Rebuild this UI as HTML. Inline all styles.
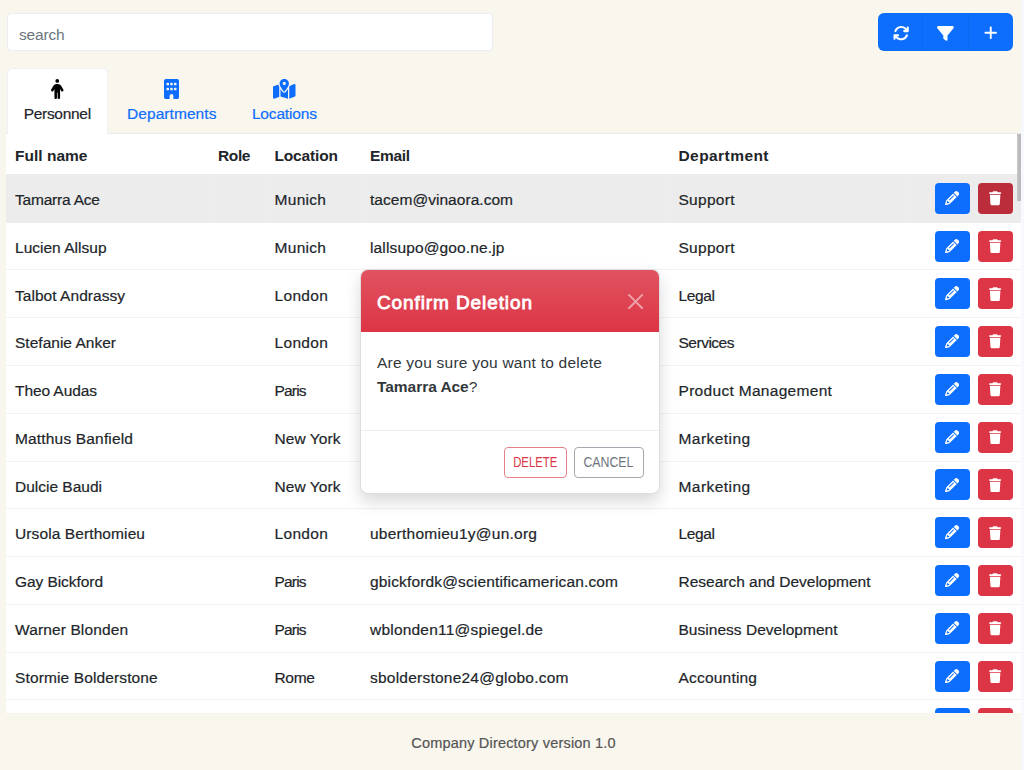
<!DOCTYPE html><html lang="en"><head><meta charset="utf-8"><title>Company Directory</title><style>
*{box-sizing:border-box}
button{font:inherit;padding:0;margin:0;border:0;cursor:pointer;display:block}
html,body{margin:0;padding:0}
body{width:1024px;height:770px;overflow:hidden;background:#f9f6ee;font-family:"Liberation Sans",sans-serif;font-size:15.5px;color:#212529;position:relative}
#tbl .r span.c,.tl,#foot{-webkit-text-stroke:0.2px}
#tbl .r.h span.c{-webkit-text-stroke:0}
.abs{position:absolute}
.ic{position:absolute;display:block}
span{white-space:nowrap}
#strip{left:1021px;top:0;width:3px;height:770px;background:#f8f9fc}
#search{left:7px;top:13px;width:486px;height:38px;background:#fff;border:1px solid #eceeef;border-radius:4px;color:#6c757d;line-height:36px;padding:3px 0 0 11px}
#grp{left:878px;top:13px;width:135px;height:38px;background:#0d6efd;border-radius:6px}
#grp i{position:absolute;top:0;width:1px;height:38px;background:#0c68f0}
#tabline{left:6px;top:133px;width:1015px;height:1px;background:#e8e9e8}
#tab1{left:7px;top:68px;width:101px;height:66px;background:#fff;border:1px solid #eef0f2;border-bottom:0;border-radius:6px 6px 0 0}
.tl{position:absolute;top:102px;height:24px;line-height:24px;text-align:center}
.blue{color:#0d6efd}
#tbl{left:6px;top:134px;width:1015px;height:579px;background:#fff;overflow:hidden}
.r{position:absolute;left:0;width:1015px;height:47.77px;border-bottom:1px solid #f0f2f4}
.r.h{height:41px;font-weight:bold;border-bottom:1px solid #e9ebed}
.r.hv{background:#ececec;border-bottom-color:#ececec}
.r span.c{position:absolute;top:2px;line-height:46.8px;height:46.8px}
.r.h span.c{line-height:40px;height:40px;top:2px}
.b{position:absolute;top:7.9px;width:35px;height:31px;border-radius:4px}
.be{left:929px;background:#0d6efd}
.bd{left:972px;background:#dc3545}
.hv .bd{background:#bb2d3b}
.vl{position:absolute;top:0;width:1px;height:47px;background:#eeeeee}
#sb{left:1017px;top:134px;width:4px;height:67px;background:linear-gradient(90deg,#cccccc,#bababa 50%,#bababa)}
#foot{left:1.5px;top:731px;width:1024px;text-align:center;font-size:14.5px;color:#555;line-height:24px}
#modal{left:360px;top:269px;width:300.4px;height:224.5px;background:#fff;border:1px solid rgba(0,0,0,.13);border-radius:8px;box-shadow:0 8px 16px rgba(0,0,0,.15)}
#mh{left:0;top:0;width:298.4px;height:62px;border-radius:7px 7px 0 0;background:#dc3545 linear-gradient(180deg,rgba(255,255,255,.15),rgba(255,255,255,0));}
#mt{left:16px;top:18px;line-height:30px;font-size:19px;font-weight:normal;-webkit-text-stroke:0.8px #fff;color:#fff}
#mb{left:16px;top:81px;line-height:24px;color:#32373b}
#mf{left:0;top:160px;width:298.4px;height:1px;background:#eceef0}
.ob span{display:inline-block;transform-origin:50% 50%}
.ob{position:absolute;top:177px;height:31px;border-radius:4px;font-size:14px;line-height:29px;text-align:center;background:#fff}
#bdel{left:143px;width:63px;border:1px solid #e8808a;color:#dc3545}
#bcan{left:213px;width:69.5px;border:1px solid #a3a9ae;color:#6c757d}
</style></head><body>
<div class="abs" id="strip"></div>
<div class="abs" id="search" role="searchbox"><span id="sph" style="letter-spacing:-0.188px">search</span></div>
<div class="abs" id="grp" role="group"><i style="left:44px"></i><i style="left:90px"></i>
<svg class="ic" style="left:15.2px;top:11.8px;width:16.3px;height:16.3px;" viewBox="0 0 512 512" fill="#fff"><path d="M105.100 202.600c7.700-21.800 20.200-42.300 37.800-59.800c62.500-62.500 163.800-62.500 226.300 0L386.300 160H352c-17.700 0-32 14.300-32 32s14.300 32 32 32H463.500c0 0 0 0 0 0h.4c17.700 0 32-14.300 32-32V80c0-17.700-14.300-32-32-32s-32 14.300-32 32v35.200L414.400 97.600c-87.500-87.500-229.300-87.500-316.800 0C73.200 122 55.600 150.700 44.800 181.400c-5.900 16.700 2.900 34.900 19.500 40.800s34.900-2.900 40.800-19.500zM39 289.300c-5 1.500-9.800 4.200-13.700 8.200c-4 4-6.700 8.800-8.100 14c-.3 1.200-.6 2.500-.8 3.800c-.3 1.700-.4 3.400-.4 5.100V432c0 17.700 14.300 32 32 32s32-14.300 32-32V396.900l17.600 17.500 0 0c87.500 87.400 229.300 87.400 316.700 0c24.400-24.400 42.100-53.100 52.900-83.700c5.900-16.700-2.900-34.900-19.500-40.800s-34.900 2.900-40.800 19.500c-7.700 21.800-20.200 42.300-37.800 59.800c-62.500 62.500-163.800 62.500-226.300 0l-.1-.1L125.600 352H160c17.700 0 32-14.300 32-32s-14.300-32-32-32H48.400c-1.600 0-3.200 .1-4.800 .3s-3.100 .5-4.600 1z"/></svg>
<svg class="ic" style="left:59px;top:11.75px;width:16.8px;height:16.8px;" viewBox="0 0 512 512" fill="#fff"><path d="M3.900 54.900C10.500 40.900 24.500 32 40 32H472c15.500 0 29.500 8.900 36.100 22.900s4.600 30.500-5.200 42.500L320 320.900V448c0 12.100-6.800 23.200-17.700 28.600s-23.800 4.300-33.500-3l-64-48c-8.100-6-12.800-15.500-12.800-25.600V320.900L9 97.300C-.7 85.400-2.800 68.800 3.900 54.900z"/></svg>
<svg class="ic" style="left:105.5px;top:12.45px;width:13.5px;height:15.4px;" viewBox="0 0 448 512" fill="#fff"><path d="M256 80c0-17.700-14.300-32-32-32s-32 14.300-32 32V224H48c-17.700 0-32 14.300-32 32s14.300 32 32 32H192V432c0 17.700 14.300 32 32 32s32-14.300 32-32V288H400c17.700 0 32-14.300 32-32s-14.300-32-32-32H256V80z"/></svg>
</div>
<div class="abs" id="tabline"></div>
<div class="abs" id="tab1"></div>
<svg class="ic" style="left:51px;top:79px;width:12.5px;height:20px;" viewBox="0 0 320 512" fill="#000"><path d="M112 48a48 48 0 1 1 96 0 48 48 0 1 1 -96 0zm40 304V480c0 17.700-14.300 32-32 32s-32-14.300-32-32V256.900L59.400 304.500c-9.100 15.100-28.800 20-43.900 10.900s-20-28.800-10.900-43.900l58.300-97c17.400-28.900 48.600-46.600 82.300-46.600h29.700c33.700 0 64.900 17.700 82.300 46.600l58.300 97c9.100 15.100 4.200 34.800-10.900 43.900s-34.800 4.200-43.900-10.900L232 256.900V480c0 17.700-14.300 32-32 32s-32-14.300-32-32V352H152z"/></svg>
<svg class="ic" style="left:164.3px;top:79.3px;width:15px;height:20px;" viewBox="0 0 384 512" fill="#0d6efd"><path d="M48 0C21.500 0 0 21.500 0 48V464c0 26.500 21.500 48 48 48h96V432c0-26.500 21.500-48 48-48s48 21.500 48 48v80h96c26.500 0 48-21.500 48-48V48c0-26.500-21.500-48-48-48H48zM64 240c0-8.800 7.200-16 16-16h32c8.800 0 16 7.200 16 16v32c0 8.800-7.200 16-16 16H80c-8.800 0-16-7.200-16-16V240zm112-16h32c8.800 0 16 7.200 16 16v32c0 8.800-7.200 16-16 16H176c-8.800 0-16-7.200-16-16V240c0-8.800 7.200-16 16-16zm80 16c0-8.800 7.200-16 16-16h32c8.800 0 16 7.200 16 16v32c0 8.800-7.200 16-16 16H272c-8.800 0-16-7.200-16-16V240zM80 96h32c8.800 0 16 7.200 16 16v32c0 8.800-7.200 16-16 16H80c-8.800 0-16-7.200-16-16V112c0-8.800 7.200-16 16-16zm80 16c0-8.800 7.200-16 16-16h32c8.800 0 16 7.200 16 16v32c0 8.800-7.200 16-16 16H176c-8.800 0-16-7.200-16-16V112zM272 96h32c8.800 0 16 7.200 16 16v32c0 8.800-7.200 16-16 16H272c-8.800 0-16-7.200-16-16V112c0-8.800 7.200-16 16-16z"/></svg>
<svg class="ic" style="left:273px;top:79.3px;width:22.5px;height:20px;" viewBox="0 0 576 512" fill="#0d6efd"><path d="M408 120c0 54.600-73.100 151.900-105.200 192c-7.700 9.600-22 9.600-29.600 0C241.100 271.900 168 174.600 168 120C168 53.700 221.700 0 288 0s120 53.700 120 120zm8 80.400c3.500-6.900 6.700-13.800 9.600-20.600c.5-1.200 1-2.500 1.500-3.700l116-46.400C558.900 123.400 576 135 576 152V422.800c0 9.800-6 18.600-15.100 22.300L416 503V200.400zM137.600 138.300c2.400 14.100 7.200 28.300 12.800 41.500c2.900 6.800 6.100 13.700 9.600 20.600V451.800L32.900 502.700C17.100 509 0 497.400 0 480.400V209.600c0-9.800 6-18.600 15.100-22.300l122.600-49zM327.800 332c13.900-17.400 35.700-45.700 56.200-77V504.300L192 449.400V255c20.500 31.300 42.300 59.600 56.200 77c20.500 25.600 59.100 25.600 79.600 0zM288 152a40 40 0 1 0 0-80 40 40 0 1 0 0 80z"/></svg>
<div class="tl" style="left:7px;width:100.5px"><span id="tp" style="letter-spacing:-0.288px">Personnel</span></div>
<div class="tl blue" style="left:111.75px;width:120px"><span id="td" style="letter-spacing:0.075px">Departments</span></div>
<div class="tl blue" style="left:234.35px;width:100px"><span id="tlc" style="letter-spacing:-0.170px">Locations</span></div>
<div class="abs" id="tbl" role="table">
<div class="r h" role="row" style="top:0"><span class="c" style="left:9px"><span id="h1" style="letter-spacing:0.018px">Full name</span></span><span class="c" style="left:212px"><span id="h2" style="letter-spacing:-0.367px">Role</span></span><span class="c" style="left:268.5px"><span id="h3" style="letter-spacing:-0.156px">Location</span></span><span class="c" style="left:364px"><span id="h4" style="letter-spacing:-0.339px">Email</span></span><span class="c" style="left:672.5px"><span id="h5" style="letter-spacing:0.430px">Department</span></span></div>
<div class="r hv" role="row" style="top:40.96px"><span class="c" style="left:9px"><span id="t10" style="letter-spacing:-0.202px">Tamarra Ace</span></span><span class="c" style="left:268.5px"><span id="t11" style="letter-spacing:0.305px">Munich</span></span><span class="c" style="left:364px"><span id="t12" style="letter-spacing:0.039px">tacem@vinaora.com</span></span><span class="c" style="left:672.5px"><span id="t13" style="letter-spacing:0.284px">Support</span></span><i class="vl" style="left:203.5px"></i><i class="vl" style="left:259.5px"></i><i class="vl" style="left:355px"></i><i class="vl" style="left:663.6px"></i><i class="vl" style="left:905.4px"></i><button type="button" class="b be" aria-label="Edit"><svg class="ic" style="left:9.6px;top:8.1px;width:14.2px;height:14.2px;" viewBox="0 0 512 512" fill="#fff"><path d="M410.300 231l11.300-11.300-33.900-33.900-62.100-62.100L291.700 89.800l-11.300 11.300-22.600 22.600L58.600 322.900c-10.400 10.400-18 23.300-22.200 37.400L1 480.700c-2.500 8.400-.2 17.500 6.100 23.700s15.300 8.500 23.700 6.100l120.300-35.400c14.100-4.200 27-11.800 37.400-22.200L387.700 253.700 410.300 231zM160 399.400l-9.100 22.700c-4 3.100-8.500 5.400-13.300 6.900L59.400 452l23-78.100c1.400-4.900 3.800-9.400 6.900-13.300l22.700-9.100v32c0 8.800 7.200 16 16 16h32zM362.700 18.700L348.300 33.200 325.700 55.800 314.300 67.100l33.900 33.900 62.100 62.100 33.900 33.900 11.300-11.300 22.600-22.600 14.500-14.500c25-25 25-65.500 0-90.500L453.300 18.700c-25-25-65.500-25-90.500 0zm-47.400 168l-144 144c-6.200 6.200-16.400 6.200-22.600 0s-6.200-16.400 0-22.600l144-144c6.200-6.200 16.400-6.200 22.600 0s6.200 16.400 0 22.600z"/></svg></button><button type="button" class="b bd" aria-label="Delete"><svg class="ic" style="left:11.4px;top:8.3px;width:12.25px;height:14.5px;" viewBox="0 0 448 512" fill="#fff"><path d="M135.200 17.700L128 32H32C14.300 32 0 46.300 0 64S14.300 96 32 96H416c17.700 0 32-14.300 32-32s-14.300-32-32-32H320l-7.200-14.300C307.400 6.800 296.300 0 284.200 0H163.800c-12.100 0-23.200 6.800-28.600 17.700zM416 128H32L53.200 467c1.600 25.300 22.600 45 47.900 45H346.900c25.300 0 46.300-19.700 47.900-45L416 128z"/></svg></button></div>
<div class="r" role="row" style="top:88.73px"><span class="c" style="left:9px"><span id="t14" style="letter-spacing:0.013px">Lucien Allsup</span></span><span class="c" style="left:268.5px"><span id="t15" style="letter-spacing:0.305px">Munich</span></span><span class="c" style="left:364px"><span id="t16" style="letter-spacing:0.136px">lallsupo@goo.ne.jp</span></span><span class="c" style="left:672.5px"><span id="t17" style="letter-spacing:0.284px">Support</span></span><button type="button" class="b be" aria-label="Edit"><svg class="ic" style="left:9.6px;top:8.1px;width:14.2px;height:14.2px;" viewBox="0 0 512 512" fill="#fff"><path d="M410.300 231l11.300-11.300-33.900-33.900-62.100-62.100L291.700 89.800l-11.300 11.300-22.600 22.600L58.600 322.900c-10.400 10.400-18 23.300-22.200 37.400L1 480.700c-2.500 8.400-.2 17.500 6.100 23.700s15.300 8.500 23.700 6.100l120.300-35.400c14.100-4.200 27-11.800 37.400-22.200L387.700 253.700 410.300 231zM160 399.400l-9.100 22.700c-4 3.100-8.500 5.400-13.300 6.900L59.400 452l23-78.100c1.400-4.900 3.800-9.400 6.900-13.300l22.700-9.100v32c0 8.800 7.200 16 16 16h32zM362.700 18.700L348.300 33.200 325.700 55.800 314.300 67.100l33.900 33.900 62.100 62.100 33.900 33.900 11.300-11.300 22.600-22.600 14.500-14.500c25-25 25-65.500 0-90.500L453.300 18.700c-25-25-65.500-25-90.500 0zm-47.400 168l-144 144c-6.200 6.200-16.400 6.200-22.600 0s-6.200-16.400 0-22.600l144-144c6.200-6.200 16.400-6.200 22.600 0s6.200 16.400 0 22.600z"/></svg></button><button type="button" class="b bd" aria-label="Delete"><svg class="ic" style="left:11.4px;top:8.3px;width:12.25px;height:14.5px;" viewBox="0 0 448 512" fill="#fff"><path d="M135.200 17.700L128 32H32C14.300 32 0 46.300 0 64S14.300 96 32 96H416c17.700 0 32-14.300 32-32s-14.300-32-32-32H320l-7.200-14.300C307.400 6.800 296.300 0 284.200 0H163.800c-12.100 0-23.200 6.800-28.600 17.700zM416 128H32L53.200 467c1.600 25.300 22.600 45 47.900 45H346.900c25.300 0 46.300-19.700 47.900-45L416 128z"/></svg></button></div>
<div class="r" role="row" style="top:136.5px"><span class="c" style="left:9px"><span id="t18" style="letter-spacing:0.041px">Talbot Andrassy</span></span><span class="c" style="left:268.5px"><span id="t19" style="letter-spacing:0.333px">London</span></span><span class="c" style="left:364px"><span id="t20">tandrassy2p@bing.com</span></span><span class="c" style="left:672.5px"><span id="t21" style="letter-spacing:-0.359px">Legal</span></span><button type="button" class="b be" aria-label="Edit"><svg class="ic" style="left:9.6px;top:8.1px;width:14.2px;height:14.2px;" viewBox="0 0 512 512" fill="#fff"><path d="M410.300 231l11.300-11.300-33.900-33.900-62.100-62.100L291.700 89.800l-11.300 11.300-22.600 22.600L58.600 322.900c-10.400 10.400-18 23.300-22.200 37.400L1 480.700c-2.500 8.400-.2 17.500 6.100 23.700s15.300 8.500 23.700 6.100l120.300-35.400c14.100-4.200 27-11.800 37.400-22.200L387.700 253.700 410.300 231zM160 399.400l-9.100 22.700c-4 3.100-8.500 5.400-13.300 6.900L59.400 452l23-78.100c1.400-4.900 3.800-9.400 6.900-13.300l22.700-9.100v32c0 8.800 7.200 16 16 16h32zM362.700 18.700L348.300 33.200 325.700 55.800 314.300 67.100l33.900 33.900 62.100 62.100 33.900 33.900 11.300-11.300 22.600-22.600 14.500-14.500c25-25 25-65.500 0-90.500L453.300 18.700c-25-25-65.500-25-90.500 0zm-47.400 168l-144 144c-6.200 6.200-16.400 6.200-22.600 0s-6.200-16.400 0-22.600l144-144c6.200-6.200 16.400-6.200 22.600 0s6.200 16.400 0 22.600z"/></svg></button><button type="button" class="b bd" aria-label="Delete"><svg class="ic" style="left:11.4px;top:8.3px;width:12.25px;height:14.5px;" viewBox="0 0 448 512" fill="#fff"><path d="M135.200 17.700L128 32H32C14.300 32 0 46.300 0 64S14.300 96 32 96H416c17.700 0 32-14.300 32-32s-14.300-32-32-32H320l-7.200-14.300C307.400 6.800 296.300 0 284.200 0H163.800c-12.100 0-23.200 6.800-28.600 17.700zM416 128H32L53.200 467c1.600 25.300 22.600 45 47.900 45H346.900c25.300 0 46.300-19.700 47.900-45L416 128z"/></svg></button></div>
<div class="r" role="row" style="top:184.27px"><span class="c" style="left:9px"><span id="t22" style="letter-spacing:0.014px">Stefanie Anker</span></span><span class="c" style="left:268.5px"><span id="t23" style="letter-spacing:0.333px">London</span></span><span class="c" style="left:364px"><span id="t24">sanker13@hc360.com</span></span><span class="c" style="left:672.5px"><span id="t25" style="letter-spacing:-0.492px">Services</span></span><button type="button" class="b be" aria-label="Edit"><svg class="ic" style="left:9.6px;top:8.1px;width:14.2px;height:14.2px;" viewBox="0 0 512 512" fill="#fff"><path d="M410.300 231l11.300-11.300-33.900-33.900-62.100-62.100L291.700 89.800l-11.300 11.300-22.600 22.600L58.600 322.900c-10.400 10.400-18 23.300-22.200 37.400L1 480.700c-2.500 8.400-.2 17.500 6.100 23.700s15.300 8.500 23.700 6.100l120.300-35.400c14.100-4.200 27-11.800 37.400-22.200L387.700 253.700 410.300 231zM160 399.400l-9.100 22.700c-4 3.100-8.500 5.400-13.300 6.900L59.400 452l23-78.100c1.400-4.900 3.800-9.400 6.900-13.300l22.700-9.100v32c0 8.800 7.200 16 16 16h32zM362.700 18.700L348.300 33.200 325.700 55.800 314.300 67.100l33.900 33.900 62.100 62.100 33.900 33.900 11.300-11.300 22.600-22.600 14.500-14.500c25-25 25-65.500 0-90.500L453.300 18.700c-25-25-65.500-25-90.500 0zm-47.400 168l-144 144c-6.200 6.200-16.400 6.200-22.600 0s-6.200-16.400 0-22.600l144-144c6.200-6.200 16.400-6.200 22.600 0s6.200 16.400 0 22.600z"/></svg></button><button type="button" class="b bd" aria-label="Delete"><svg class="ic" style="left:11.4px;top:8.3px;width:12.25px;height:14.5px;" viewBox="0 0 448 512" fill="#fff"><path d="M135.200 17.700L128 32H32C14.300 32 0 46.300 0 64S14.300 96 32 96H416c17.700 0 32-14.300 32-32s-14.300-32-32-32H320l-7.200-14.300C307.400 6.800 296.300 0 284.200 0H163.800c-12.100 0-23.200 6.800-28.600 17.700zM416 128H32L53.200 467c1.600 25.300 22.600 45 47.900 45H346.900c25.300 0 46.300-19.700 47.900-45L416 128z"/></svg></button></div>
<div class="r" role="row" style="top:232.04px"><span class="c" style="left:9px"><span id="t26" style="letter-spacing:-0.082px">Theo Audas</span></span><span class="c" style="left:268.5px"><span id="t27" style="letter-spacing:-0.829px">Paris</span></span><span class="c" style="left:364px"><span id="t28">taudasa@newsvine.com</span></span><span class="c" style="left:672.5px"><span id="t29" style="letter-spacing:0.305px">Product Management</span></span><button type="button" class="b be" aria-label="Edit"><svg class="ic" style="left:9.6px;top:8.1px;width:14.2px;height:14.2px;" viewBox="0 0 512 512" fill="#fff"><path d="M410.300 231l11.300-11.300-33.900-33.900-62.100-62.100L291.700 89.800l-11.300 11.300-22.600 22.600L58.600 322.900c-10.400 10.400-18 23.300-22.200 37.400L1 480.700c-2.500 8.400-.2 17.500 6.100 23.700s15.300 8.500 23.700 6.100l120.300-35.400c14.100-4.200 27-11.800 37.400-22.200L387.700 253.700 410.300 231zM160 399.400l-9.100 22.700c-4 3.100-8.500 5.400-13.300 6.900L59.400 452l23-78.100c1.400-4.900 3.800-9.400 6.900-13.300l22.700-9.100v32c0 8.800 7.200 16 16 16h32zM362.700 18.700L348.300 33.200 325.700 55.800 314.300 67.100l33.900 33.900 62.100 62.100 33.900 33.900 11.300-11.300 22.600-22.600 14.500-14.500c25-25 25-65.500 0-90.500L453.300 18.700c-25-25-65.500-25-90.500 0zm-47.400 168l-144 144c-6.200 6.200-16.400 6.200-22.600 0s-6.200-16.400 0-22.600l144-144c6.200-6.200 16.400-6.200 22.600 0s6.200 16.400 0 22.600z"/></svg></button><button type="button" class="b bd" aria-label="Delete"><svg class="ic" style="left:11.4px;top:8.3px;width:12.25px;height:14.5px;" viewBox="0 0 448 512" fill="#fff"><path d="M135.200 17.700L128 32H32C14.300 32 0 46.300 0 64S14.300 96 32 96H416c17.700 0 32-14.300 32-32s-14.300-32-32-32H320l-7.200-14.300C307.400 6.800 296.300 0 284.200 0H163.800c-12.100 0-23.200 6.800-28.600 17.700zM416 128H32L53.200 467c1.600 25.300 22.600 45 47.900 45H346.900c25.300 0 46.300-19.700 47.900-45L416 128z"/></svg></button></div>
<div class="r" role="row" style="top:279.81px"><span class="c" style="left:9px"><span id="t30" style="letter-spacing:0.169px">Matthus Banfield</span></span><span class="c" style="left:268.5px"><span id="t31" style="letter-spacing:0.073px">New York</span></span><span class="c" style="left:364px"><span id="t32">mbanfield2b@angelfire.com</span></span><span class="c" style="left:672.5px"><span id="t33" style="letter-spacing:0.455px">Marketing</span></span><button type="button" class="b be" aria-label="Edit"><svg class="ic" style="left:9.6px;top:8.1px;width:14.2px;height:14.2px;" viewBox="0 0 512 512" fill="#fff"><path d="M410.300 231l11.300-11.300-33.900-33.900-62.100-62.100L291.700 89.800l-11.300 11.300-22.600 22.600L58.600 322.900c-10.400 10.400-18 23.300-22.200 37.400L1 480.700c-2.500 8.400-.2 17.500 6.100 23.700s15.300 8.500 23.700 6.100l120.300-35.400c14.100-4.200 27-11.800 37.400-22.200L387.700 253.700 410.300 231zM160 399.400l-9.100 22.700c-4 3.100-8.500 5.400-13.300 6.900L59.400 452l23-78.100c1.400-4.900 3.800-9.400 6.900-13.300l22.700-9.100v32c0 8.800 7.200 16 16 16h32zM362.700 18.700L348.300 33.200 325.700 55.800 314.300 67.100l33.900 33.900 62.100 62.100 33.900 33.900 11.300-11.300 22.600-22.600 14.500-14.500c25-25 25-65.500 0-90.500L453.300 18.700c-25-25-65.500-25-90.500 0zm-47.400 168l-144 144c-6.200 6.200-16.400 6.200-22.600 0s-6.200-16.400 0-22.600l144-144c6.200-6.200 16.400-6.200 22.600 0s6.200 16.400 0 22.600z"/></svg></button><button type="button" class="b bd" aria-label="Delete"><svg class="ic" style="left:11.4px;top:8.3px;width:12.25px;height:14.5px;" viewBox="0 0 448 512" fill="#fff"><path d="M135.200 17.700L128 32H32C14.300 32 0 46.300 0 64S14.300 96 32 96H416c17.700 0 32-14.300 32-32s-14.300-32-32-32H320l-7.200-14.300C307.400 6.800 296.300 0 284.200 0H163.800c-12.100 0-23.200 6.800-28.600 17.700zM416 128H32L53.200 467c1.600 25.300 22.600 45 47.900 45H346.900c25.300 0 46.300-19.700 47.900-45L416 128z"/></svg></button></div>
<div class="r" role="row" style="top:327.58px"><span class="c" style="left:9px"><span id="t34" style="letter-spacing:-0.003px">Dulcie Baudi</span></span><span class="c" style="left:268.5px"><span id="t35" style="letter-spacing:0.073px">New York</span></span><span class="c" style="left:364px"><span id="t36">dbaudi1s@slate.com</span></span><span class="c" style="left:672.5px"><span id="t37" style="letter-spacing:0.455px">Marketing</span></span><button type="button" class="b be" aria-label="Edit"><svg class="ic" style="left:9.6px;top:8.1px;width:14.2px;height:14.2px;" viewBox="0 0 512 512" fill="#fff"><path d="M410.300 231l11.300-11.300-33.900-33.900-62.100-62.100L291.700 89.800l-11.300 11.300-22.600 22.600L58.600 322.900c-10.400 10.400-18 23.300-22.200 37.400L1 480.700c-2.500 8.400-.2 17.500 6.100 23.700s15.300 8.500 23.700 6.100l120.300-35.400c14.100-4.200 27-11.800 37.400-22.200L387.700 253.700 410.300 231zM160 399.400l-9.100 22.700c-4 3.100-8.500 5.400-13.300 6.900L59.400 452l23-78.100c1.400-4.900 3.800-9.400 6.900-13.300l22.700-9.100v32c0 8.800 7.200 16 16 16h32zM362.700 18.700L348.300 33.200 325.700 55.800 314.300 67.100l33.900 33.900 62.100 62.100 33.900 33.900 11.300-11.300 22.600-22.600 14.500-14.500c25-25 25-65.500 0-90.500L453.300 18.700c-25-25-65.500-25-90.500 0zm-47.400 168l-144 144c-6.200 6.200-16.400 6.200-22.600 0s-6.200-16.400 0-22.600l144-144c6.200-6.200 16.400-6.200 22.600 0s6.200 16.400 0 22.600z"/></svg></button><button type="button" class="b bd" aria-label="Delete"><svg class="ic" style="left:11.4px;top:8.3px;width:12.25px;height:14.5px;" viewBox="0 0 448 512" fill="#fff"><path d="M135.200 17.700L128 32H32C14.300 32 0 46.300 0 64S14.300 96 32 96H416c17.700 0 32-14.300 32-32s-14.300-32-32-32H320l-7.200-14.300C307.400 6.800 296.300 0 284.200 0H163.800c-12.100 0-23.200 6.800-28.600 17.700zM416 128H32L53.200 467c1.600 25.300 22.600 45 47.900 45H346.900c25.300 0 46.300-19.700 47.900-45L416 128z"/></svg></button></div>
<div class="r" role="row" style="top:375.35px"><span class="c" style="left:9px"><span id="t38" style="letter-spacing:0.102px">Ursola Berthomieu</span></span><span class="c" style="left:268.5px"><span id="t39" style="letter-spacing:0.333px">London</span></span><span class="c" style="left:364px"><span id="t40" style="letter-spacing:0.251px">uberthomieu1y@un.org</span></span><span class="c" style="left:672.5px"><span id="t41" style="letter-spacing:-0.359px">Legal</span></span><button type="button" class="b be" aria-label="Edit"><svg class="ic" style="left:9.6px;top:8.1px;width:14.2px;height:14.2px;" viewBox="0 0 512 512" fill="#fff"><path d="M410.300 231l11.300-11.300-33.900-33.900-62.100-62.100L291.700 89.800l-11.300 11.300-22.600 22.600L58.600 322.900c-10.400 10.400-18 23.300-22.200 37.400L1 480.700c-2.500 8.400-.2 17.500 6.100 23.700s15.300 8.500 23.700 6.100l120.300-35.400c14.100-4.200 27-11.800 37.400-22.200L387.700 253.700 410.300 231zM160 399.400l-9.100 22.700c-4 3.100-8.500 5.400-13.300 6.900L59.400 452l23-78.100c1.400-4.900 3.800-9.400 6.900-13.300l22.700-9.100v32c0 8.800 7.200 16 16 16h32zM362.700 18.700L348.300 33.200 325.700 55.800 314.300 67.100l33.900 33.900 62.100 62.100 33.900 33.900 11.300-11.300 22.600-22.600 14.500-14.500c25-25 25-65.500 0-90.500L453.300 18.700c-25-25-65.500-25-90.500 0zm-47.400 168l-144 144c-6.200 6.200-16.400 6.200-22.600 0s-6.200-16.400 0-22.600l144-144c6.200-6.200 16.400-6.200 22.600 0s6.200 16.400 0 22.600z"/></svg></button><button type="button" class="b bd" aria-label="Delete"><svg class="ic" style="left:11.4px;top:8.3px;width:12.25px;height:14.5px;" viewBox="0 0 448 512" fill="#fff"><path d="M135.200 17.700L128 32H32C14.300 32 0 46.300 0 64S14.300 96 32 96H416c17.700 0 32-14.300 32-32s-14.300-32-32-32H320l-7.200-14.300C307.400 6.800 296.300 0 284.200 0H163.800c-12.100 0-23.200 6.800-28.600 17.700zM416 128H32L53.200 467c1.600 25.300 22.600 45 47.900 45H346.900c25.300 0 46.300-19.700 47.900-45L416 128z"/></svg></button></div>
<div class="r" role="row" style="top:423.12px"><span class="c" style="left:9px"><span id="t42" style="letter-spacing:-0.066px">Gay Bickford</span></span><span class="c" style="left:268.5px"><span id="t43" style="letter-spacing:-0.829px">Paris</span></span><span class="c" style="left:364px"><span id="t44" style="letter-spacing:0.151px">gbickfordk@scientificamerican.com</span></span><span class="c" style="left:672.5px"><span id="t45" style="letter-spacing:-0.006px">Research and Development</span></span><button type="button" class="b be" aria-label="Edit"><svg class="ic" style="left:9.6px;top:8.1px;width:14.2px;height:14.2px;" viewBox="0 0 512 512" fill="#fff"><path d="M410.300 231l11.300-11.300-33.900-33.900-62.100-62.100L291.700 89.800l-11.300 11.300-22.600 22.600L58.600 322.900c-10.400 10.400-18 23.300-22.200 37.400L1 480.700c-2.500 8.400-.2 17.500 6.100 23.700s15.300 8.500 23.700 6.100l120.300-35.400c14.100-4.200 27-11.800 37.400-22.200L387.700 253.700 410.300 231zM160 399.400l-9.100 22.700c-4 3.100-8.500 5.400-13.300 6.900L59.400 452l23-78.100c1.400-4.900 3.800-9.400 6.900-13.300l22.700-9.100v32c0 8.800 7.200 16 16 16h32zM362.700 18.700L348.300 33.200 325.700 55.800 314.300 67.100l33.900 33.900 62.100 62.100 33.900 33.900 11.300-11.300 22.600-22.600 14.500-14.500c25-25 25-65.500 0-90.500L453.300 18.700c-25-25-65.500-25-90.500 0zm-47.400 168l-144 144c-6.200 6.200-16.400 6.200-22.600 0s-6.200-16.400 0-22.600l144-144c6.200-6.200 16.400-6.200 22.600 0s6.200 16.400 0 22.600z"/></svg></button><button type="button" class="b bd" aria-label="Delete"><svg class="ic" style="left:11.4px;top:8.3px;width:12.25px;height:14.5px;" viewBox="0 0 448 512" fill="#fff"><path d="M135.200 17.700L128 32H32C14.300 32 0 46.300 0 64S14.300 96 32 96H416c17.700 0 32-14.300 32-32s-14.300-32-32-32H320l-7.200-14.300C307.400 6.800 296.300 0 284.200 0H163.800c-12.100 0-23.200 6.800-28.600 17.700zM416 128H32L53.200 467c1.600 25.300 22.600 45 47.900 45H346.900c25.300 0 46.300-19.700 47.900-45L416 128z"/></svg></button></div>
<div class="r" role="row" style="top:470.89px"><span class="c" style="left:9px"><span id="t46" style="letter-spacing:0.121px">Warner Blonden</span></span><span class="c" style="left:268.5px"><span id="t47" style="letter-spacing:-0.829px">Paris</span></span><span class="c" style="left:364px"><span id="t48" style="letter-spacing:0.207px">wblonden11@spiegel.de</span></span><span class="c" style="left:672.5px"><span id="t49" style="letter-spacing:0.025px">Business Development</span></span><button type="button" class="b be" aria-label="Edit"><svg class="ic" style="left:9.6px;top:8.1px;width:14.2px;height:14.2px;" viewBox="0 0 512 512" fill="#fff"><path d="M410.300 231l11.300-11.300-33.900-33.900-62.100-62.100L291.700 89.800l-11.300 11.300-22.600 22.600L58.600 322.900c-10.400 10.400-18 23.300-22.200 37.400L1 480.700c-2.500 8.400-.2 17.500 6.100 23.700s15.300 8.500 23.700 6.100l120.300-35.400c14.100-4.200 27-11.800 37.400-22.200L387.700 253.700 410.300 231zM160 399.400l-9.100 22.700c-4 3.100-8.500 5.400-13.300 6.900L59.400 452l23-78.100c1.400-4.900 3.800-9.400 6.900-13.300l22.700-9.100v32c0 8.800 7.200 16 16 16h32zM362.700 18.700L348.300 33.200 325.700 55.800 314.300 67.100l33.900 33.900 62.100 62.100 33.900 33.900 11.300-11.300 22.600-22.600 14.500-14.500c25-25 25-65.500 0-90.500L453.300 18.700c-25-25-65.500-25-90.500 0zm-47.400 168l-144 144c-6.200 6.200-16.400 6.200-22.600 0s-6.200-16.400 0-22.600l144-144c6.200-6.200 16.400-6.200 22.600 0s6.200 16.400 0 22.600z"/></svg></button><button type="button" class="b bd" aria-label="Delete"><svg class="ic" style="left:11.4px;top:8.3px;width:12.25px;height:14.5px;" viewBox="0 0 448 512" fill="#fff"><path d="M135.200 17.700L128 32H32C14.300 32 0 46.300 0 64S14.300 96 32 96H416c17.700 0 32-14.300 32-32s-14.300-32-32-32H320l-7.200-14.300C307.400 6.800 296.300 0 284.200 0H163.800c-12.100 0-23.200 6.800-28.600 17.700zM416 128H32L53.200 467c1.600 25.300 22.600 45 47.900 45H346.900c25.300 0 46.300-19.700 47.900-45L416 128z"/></svg></button></div>
<div class="r" role="row" style="top:518.66px"><span class="c" style="left:9px"><span id="t50" style="letter-spacing:0.126px">Stormie Bolderstone</span></span><span class="c" style="left:268.5px"><span id="t51" style="letter-spacing:-0.319px">Rome</span></span><span class="c" style="left:364px"><span id="t52" style="letter-spacing:0.228px">sbolderstone24@globo.com</span></span><span class="c" style="left:672.5px"><span id="t53" style="letter-spacing:0.200px">Accounting</span></span><button type="button" class="b be" aria-label="Edit"><svg class="ic" style="left:9.6px;top:8.1px;width:14.2px;height:14.2px;" viewBox="0 0 512 512" fill="#fff"><path d="M410.300 231l11.300-11.300-33.900-33.900-62.100-62.100L291.700 89.800l-11.300 11.300-22.600 22.600L58.600 322.900c-10.400 10.400-18 23.300-22.200 37.400L1 480.700c-2.500 8.400-.2 17.500 6.100 23.700s15.300 8.500 23.700 6.100l120.300-35.400c14.100-4.200 27-11.800 37.400-22.200L387.700 253.700 410.300 231zM160 399.400l-9.100 22.700c-4 3.100-8.500 5.400-13.300 6.900L59.400 452l23-78.100c1.400-4.900 3.800-9.400 6.900-13.300l22.700-9.100v32c0 8.800 7.200 16 16 16h32zM362.700 18.700L348.300 33.200 325.700 55.800 314.300 67.100l33.900 33.900 62.100 62.100 33.900 33.900 11.300-11.300 22.600-22.600 14.500-14.500c25-25 25-65.500 0-90.500L453.300 18.700c-25-25-65.500-25-90.500 0zm-47.400 168l-144 144c-6.200 6.200-16.400 6.200-22.600 0s-6.200-16.400 0-22.600l144-144c6.200-6.200 16.400-6.200 22.600 0s6.200 16.400 0 22.600z"/></svg></button><button type="button" class="b bd" aria-label="Delete"><svg class="ic" style="left:11.4px;top:8.3px;width:12.25px;height:14.5px;" viewBox="0 0 448 512" fill="#fff"><path d="M135.200 17.700L128 32H32C14.300 32 0 46.300 0 64S14.300 96 32 96H416c17.700 0 32-14.300 32-32s-14.300-32-32-32H320l-7.200-14.300C307.400 6.800 296.300 0 284.200 0H163.800c-12.100 0-23.200 6.800-28.600 17.700zM416 128H32L53.200 467c1.600 25.300 22.600 45 47.900 45H346.900c25.300 0 46.300-19.700 47.900-45L416 128z"/></svg></button></div>
<div class="r" role="row" style="top:566.43px"><span class="c" style="left:9px"><span id="t54"></span></span><span class="c" style="left:268.5px"><span id="t55" style="letter-spacing:-0.829px"></span></span><span class="c" style="left:364px"><span id="t56"></span></span><span class="c" style="left:672.5px"><span id="t57"></span></span><button type="button" class="b be" aria-label="Edit"><svg class="ic" style="left:9.6px;top:8.1px;width:14.2px;height:14.2px;" viewBox="0 0 512 512" fill="#fff"><path d="M410.300 231l11.300-11.300-33.900-33.900-62.100-62.100L291.700 89.800l-11.300 11.300-22.600 22.600L58.600 322.900c-10.400 10.400-18 23.300-22.200 37.400L1 480.700c-2.500 8.400-.2 17.500 6.100 23.700s15.300 8.500 23.700 6.100l120.300-35.400c14.100-4.200 27-11.800 37.400-22.200L387.700 253.700 410.300 231zM160 399.400l-9.100 22.700c-4 3.100-8.500 5.400-13.300 6.900L59.400 452l23-78.100c1.400-4.900 3.800-9.400 6.900-13.300l22.700-9.100v32c0 8.800 7.200 16 16 16h32zM362.700 18.700L348.300 33.200 325.700 55.800 314.300 67.100l33.900 33.900 62.100 62.100 33.900 33.900 11.300-11.300 22.600-22.600 14.500-14.500c25-25 25-65.500 0-90.500L453.300 18.700c-25-25-65.500-25-90.500 0zm-47.400 168l-144 144c-6.200 6.200-16.400 6.200-22.600 0s-6.200-16.400 0-22.600l144-144c6.200-6.200 16.400-6.200 22.600 0s6.200 16.400 0 22.600z"/></svg></button><button type="button" class="b bd" aria-label="Delete"><svg class="ic" style="left:11.4px;top:8.3px;width:12.25px;height:14.5px;" viewBox="0 0 448 512" fill="#fff"><path d="M135.200 17.700L128 32H32C14.300 32 0 46.300 0 64S14.300 96 32 96H416c17.700 0 32-14.300 32-32s-14.300-32-32-32H320l-7.200-14.300C307.400 6.800 296.300 0 284.200 0H163.800c-12.100 0-23.200 6.800-28.600 17.700zM416 128H32L53.200 467c1.600 25.300 22.600 45 47.900 45H346.900c25.300 0 46.300-19.700 47.900-45L416 128z"/></svg></button></div>
</div>
<div class="abs" id="sb"></div>
<footer class="abs" id="foot"><span id="ft" style="letter-spacing:0.187px">Company Directory version 1.0</span></footer>
<div class="abs" id="modal" role="dialog" aria-labelledby="mt">
<div class="abs" id="mh"></div>
<div class="abs" id="mt"><span id="mtt" style="letter-spacing:0.900px">Confirm Deletion</span></div>
<svg class="ic" style="left:266.5px;top:23.65px;width:15.2px;height:15.2px;opacity:.5" viewBox="0 0 16 16" fill="#fff"><path d="M.293.293a1 1 0 0 1 1.414 0L8 6.586 14.293.293a1 1 0 1 1 1.414 1.414L9.414 8l6.293 6.293a1 1 0 0 1-1.414 1.414L8 9.414l-6.293 6.293a1 1 0 0 1-1.414-1.414L6.586 8 .293 1.707a1 1 0 0 1 0-1.414z"/></svg>
<div class="abs" id="mb"><span id="mb1" style="letter-spacing:0.233px">Are you sure you want to delete</span><br><b><span id="mb2" style="letter-spacing:-0.045px">Tamarra Ace</span></b>?</div>
<div class="abs" id="mf"></div>
<button type="button" class="ob" id="bdel"><span style="transform:scaleX(.81)">DELETE</span></button>
<button type="button" class="ob" id="bcan"><span style="transform:scaleX(.88)">CANCEL</span></button>
</div>
</body></html>
